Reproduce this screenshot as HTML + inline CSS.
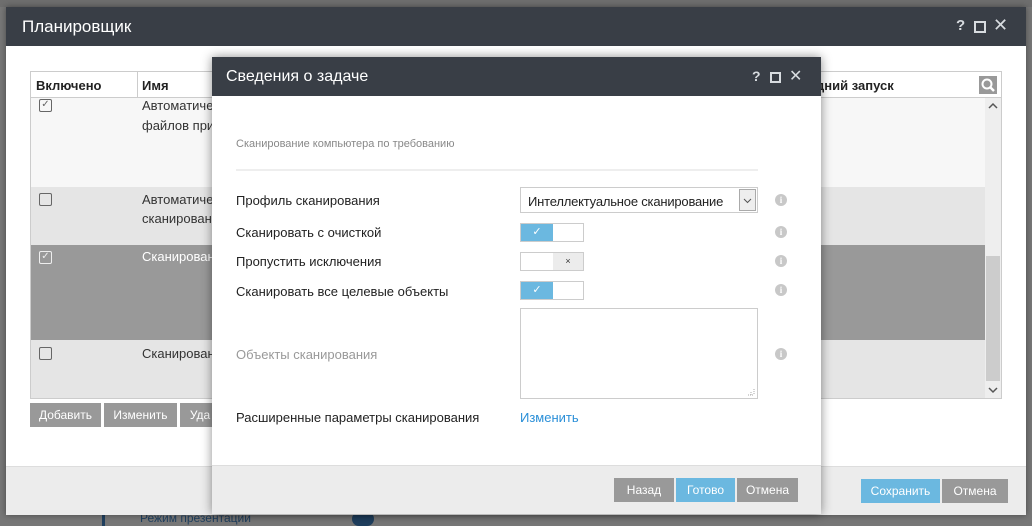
<!DOCTYPE html>
<html><head><meta charset="utf-8"><style>
*{box-sizing:border-box;margin:0;padding:0}
body{width:1032px;height:526px;overflow:hidden;background:#777;font-family:"Liberation Sans","DejaVu Sans",sans-serif;position:relative;font-size:13px;color:#222}
.abs{position:absolute}
.win{left:6px;top:7px;width:1020px;height:508px;background:#fff;box-shadow:0 0 6px rgba(0,0,0,.4)}
.tb{background:#393e46;color:#fff}
.ic{color:#d8dce0;font-weight:bold}
.btn{position:absolute;color:#fff;font-size:12px;text-align:center;line-height:24px}
.g{background:#999}.b{background:#6bb8e0}
.lbl{position:absolute;left:24px;font-size:13px;color:#222}
.info{position:absolute;left:563px;width:12px;height:12px;border-radius:6px;background:#c8c8c8;color:#fff;font-size:9px;font-weight:bold;text-align:center;line-height:12px;font-family:"Liberation Serif",serif}
.tog{position:absolute;left:308px;width:64px;height:19px;border:1px solid #ccc;background:#fff}
.tog .on{position:absolute;left:0;top:0;width:32px;height:17px;background:#6bb8e0;color:#fff;text-align:center;font-size:11px;line-height:17px}
.cb{position:absolute;left:8px;width:13px;height:13px;border:1.5px solid #666;border-radius:2px;font-size:10px;line-height:10px;text-align:center;color:#666}
</style></head><body>
<div class="abs" style="left:0;top:0;width:1032px;height:7px;background:#6e6e6e"></div>
<div class="abs" style="left:140px;top:511px;color:#1f3f5e;font-size:12px">Режим презентации</div>
<div class="abs" style="left:352px;top:512px;width:22px;height:14px;border-radius:7px;background:#1f3f5e"></div>
<div class="abs" style="left:102px;top:512px;width:3px;height:14px;background:#1f3f5e"></div>

<div class="abs win">
 <div class="abs tb" style="left:0;top:0;width:1020px;height:39px"><div class="abs" style="left:16px;top:10px;font-size:17px">Планировщик</div>
  <div class="abs ic" style="left:950px;top:10px;font-size:15px">?</div>
  <div class="abs" style="left:968px;top:14px;width:12px;height:12px;border:2px solid #d8dce0"></div>
  <div class="abs ic" style="left:987px;top:8px;font-size:18px;font-weight:normal">✕</div>
 </div>
 <div class="abs" style="left:24px;top:64px;width:972px;height:328px;border:1px solid #ccc;background:#f7f7f7;overflow:hidden">
  <div class="abs" style="left:0;top:0;width:972px;height:26px;background:#fff;border-bottom:1px solid #ccc;font-weight:bold;font-size:13px">
   <div class="abs" style="left:5px;top:6px">Включено</div>
   <div class="abs" style="left:106px;top:0;width:1px;height:26px;background:#ccc"></div>
   <div class="abs" style="left:111px;top:6px">Имя</div>
   <div class="abs" style="left:785px;top:6px">дний запуск</div>
   <div class="abs" style="left:948px;top:4px;width:18px;height:18px;background:#999"><svg width="18" height="18" viewBox="0 0 18 18"><circle cx="8" cy="8" r="4.5" fill="none" stroke="#fff" stroke-width="2"/><path d="M11 11l4 4" stroke="#fff" stroke-width="2.5"/></svg></div>
  </div>
  <div class="abs" style="left:0;top:26px;width:954px;height:89px;background:#f7f7f7"><div class="cb" style="top:1px">✓</div><div class="abs" style="left:111px;top:-2px;line-height:20px;color:#333">Автоматиче<br>файлов при</div></div>
  <div class="abs" style="left:0;top:115px;width:954px;height:58px;background:#e5e5e5"><div class="cb" style="top:6px"></div><div class="abs" style="left:111px;top:3px;line-height:19px;color:#333">Автоматиче<br>сканирован</div></div>
  <div class="abs" style="left:0;top:173px;width:954px;height:95px;background:#999"><div class="cb" style="top:6px;border-color:#eee;color:#eee">✓</div><div class="abs" style="left:111px;top:4px;color:#fff">Сканирован</div></div>
  <div class="abs" style="left:0;top:268px;width:954px;height:60px;background:#e5e5e5"><div class="cb" style="top:7px"></div><div class="abs" style="left:111px;top:6px;color:#333">Сканирован</div></div>
  <div class="abs" style="left:954px;top:26px;width:17px;height:302px;background:#eee"><div class="abs" style="left:1px;top:158px;width:14px;height:125px;background:#ccc"></div>
   <svg class="abs" style="left:3px;top:4px" width="10" height="8"><path d="M1 6l4-4 4 4" fill="none" stroke="#555" stroke-width="1.5"/></svg>
   <svg class="abs" style="left:3px;top:288px" width="10" height="8"><path d="M1 2l4 4 4-4" fill="none" stroke="#555" stroke-width="1.5"/></svg></div>
 </div>
 <div class="btn g" style="left:24px;top:396px;width:71px">Добавить</div>
 <div class="btn g" style="left:98px;top:396px;width:73px">Изменить</div>
 <div class="btn g" style="left:174px;top:396px;width:40px">Уда</div>
 <div class="abs" style="left:0;top:459px;width:1020px;height:49px;background:#ececec;border-top:1px solid #ddd"></div>
 <div class="btn b" style="left:855px;top:472px;width:79px">Сохранить</div>
 <div class="btn g" style="left:936px;top:472px;width:66px">Отмена</div>
</div>

<div class="abs" style="left:212px;top:57px;width:609px;height:457px;background:#fff;box-shadow:0 0 10px rgba(0,0,0,.45)">
 <div class="abs tb" style="left:0;top:0;width:609px;height:39px"><div class="abs" style="left:14px;top:11px;font-size:16px">Сведения о задаче</div>
  <div class="abs ic" style="left:540px;top:11px;font-size:14px">?</div>
  <div class="abs" style="left:558px;top:15px;width:11px;height:11px;border:2px solid #d8dce0"></div>
  <div class="abs ic" style="left:577px;top:9px;font-size:16px;font-weight:normal">✕</div>
 </div>
 <div class="abs" style="left:24px;top:81px;font-size:11px;color:#888">Сканирование компьютера по требованию</div>
 <div class="abs" style="left:24px;top:112px;width:522px;height:2px;background:#eee"></div>
 <div class="lbl" style="top:136px">Профиль сканирования</div>
 <div class="abs" style="left:308px;top:130px;width:238px;height:26px;border:1px solid #ccc;font-size:13px;padding:6px 0 0 7px;letter-spacing:-0.2px">Интеллектуальное сканирование<div class="abs" style="left:218px;top:1px;width:17px;height:22px;border:1px solid #aaa;background:#eee"><svg width="15" height="20"><path d="M4 9l3.5 3.5L11 9" fill="none" stroke="#555" stroke-width="1"/></svg></div></div>
 <div class="info" style="top:137px">i</div>
 <div class="lbl" style="top:168px">Сканировать с очисткой</div>
 <div class="tog" style="top:166px"><div class="on">✓</div></div><div class="info" style="top:169px">i</div>
 <div class="lbl" style="top:197px">Пропустить исключения</div>
 <div class="tog" style="top:195px"><div class="abs" style="left:32px;top:0;width:30px;height:17px;background:#ececec;font-size:9px;text-align:center;line-height:17px;color:#333">×</div></div><div class="info" style="top:198px">i</div>
 <div class="lbl" style="top:227px">Сканировать все целевые объекты</div>
 <div class="tog" style="top:224px"><div class="on">✓</div></div><div class="info" style="top:227px">i</div>
 <div class="lbl" style="top:290px;color:#999">Объекты сканирования</div>
 <div class="abs" style="left:308px;top:251px;width:238px;height:91px;border:1px solid #ccc"><svg class="abs" style="right:2px;bottom:2px" width="8" height="8"><path d="M7 1v6M4 4v3M1 7h6" stroke="#aaa" stroke-width="1" stroke-dasharray="1 1"/></svg></div>
 <div class="info" style="top:291px">i</div>
 <div class="lbl" style="top:353px">Расширенные параметры сканирования</div>
 <div class="abs" style="left:308px;top:353px;color:#2a8fd8">Изменить</div>
 <div class="abs" style="left:0;top:408px;width:609px;height:49px;background:#ececec;border-top:1px solid #ddd"></div>
 <div class="btn g" style="left:402px;top:421px;width:60px">Назад</div>
 <div class="btn b" style="left:464px;top:421px;width:59px">Готово</div>
 <div class="btn g" style="left:525px;top:421px;width:61px">Отмена</div>
</div>
</body></html>
